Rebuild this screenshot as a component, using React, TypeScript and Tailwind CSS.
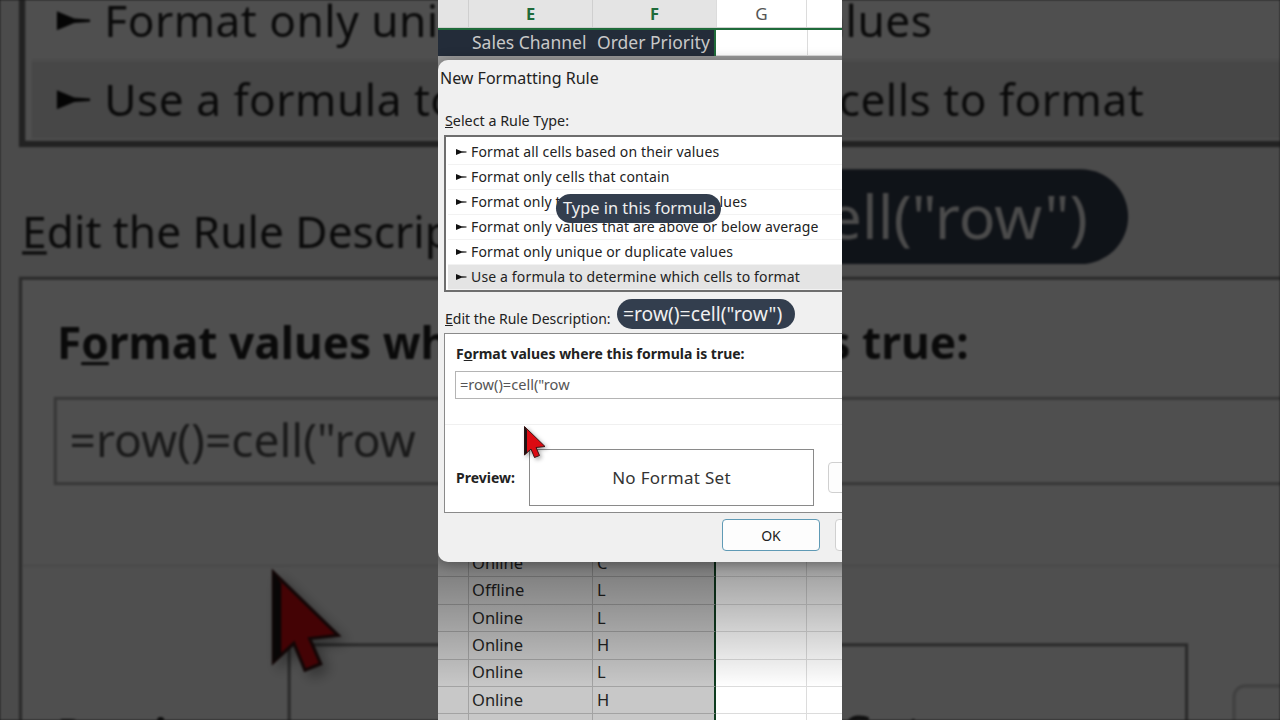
const FONT = "font-['Noto_Sans',sans-serif]";

const ruleTypes = [
  'Format all cells based on their values',
  'Format only cells that contain',
  'Format only top or bottom ranked values',
  'Format only values that are above or below average',
  'Format only unique or duplicate values',
  'Use a formula to determine which cells to format',
];

const bottomRows = [
  ['Online', 'C'],
  ['Offline', 'L'],
  ['Online', 'L'],
  ['Online', 'H'],
  ['Online', 'L'],
  ['Online', 'H'],
  ['', ''],
];

function Bullet() {
  return (
    <svg width="12" height="8" viewBox="0 0 12 8" className="shrink-0">
      <path d="M1 1 L6.5 3.3 L11.5 3.6 L11.5 4.4 L6.5 4.7 L1 7 Z" fill="#111" />
    </svg>
  );
}

function Cursor() {
  return (
    <svg width="26" height="36" viewBox="0 0 26 36" className="absolute left-[85px] top-[365px] drop-shadow-[2px_2px_2px_rgba(0,0,0,0.35)]">
      <path d="M1.5 1.5 L1.5 30 L8 24 L11.5 32.5 L16.5 30.5 L13 22.5 L22 21.5 Z" fill="#dc0a12" stroke="#3a1414" strokeWidth="1" />
      <path d="M1.5 1.5 L1.5 30 L4 27.5 L4 5 Z" fill="#1c1414" />
    </svg>
  );
}

// the dialog is wider than the middle column, it gets clipped there
function Dialog() {
  return (
    <div className={`relative flex h-[502px] w-[420px] flex-col rounded-[10px] bg-[#f0f0f0] text-[#222] ${FONT}`}>
      <div className="pl-[2px] pt-[7px] text-[16px] leading-[22px]">New Formatting Rule</div>
      <div className="pl-[7px] pt-[22px] text-[14.3px] leading-[20px]">
        <u>S</u>elect a Rule Type:
      </div>
      <div className="ml-[6px] mt-[4px] flex h-[157px] flex-col border-2 border-[#6e6e6e] bg-white pl-[2px] pt-[2.5px]">
        {ruleTypes.map((t, i) => (
          <div
            key={t}
            className={`flex h-[25px] shrink-0 items-center gap-[4px] border-b border-[#f2f2f2] pl-[7px] text-[14px] tracking-[0.15px] ${i === 5 ? 'bg-[#e4e4e4]' : ''}`}
          >
            <Bullet />
            {t}
          </div>
        ))}
      </div>
      <div className="pl-[7px] pt-[17px] text-[14px] leading-[20px]">
        <u>E</u>dit the Rule Description:
      </div>
      <div className="ml-[6px] mt-[4px] h-[180px] border border-[#8a8a8a] bg-white">
        <div className="pl-[11px] pt-[10px] text-[14px] font-bold leading-[20px]">
          F<u>o</u>rmat values where this formula is true:
        </div>
        <div className="ml-[10px] mt-[7px] flex h-[28px] items-center border border-[#b4b4b4] pl-[4px] text-[14.6px] text-[#555]">
          =row()=cell("row
        </div>
        <div className="mt-[25px] border-t border-[#f0f0f0]" />
        <div className="flex items-center pl-[11px] pt-[24px]">
          <div className="w-[73px] shrink-0 text-[14px] font-bold">Preview:</div>
          <div className="flex h-[57px] w-[285px] shrink-0 items-center justify-center border border-[#8a8a8a] text-[17px] tracking-[0.3px] text-[#333]">
            No Format Set
          </div>
          <div className="ml-[14px] h-[31px] w-[40px] shrink-0 rounded-[4px] border border-[#d0d0d0] bg-[#fdfdfd]" />
        </div>
      </div>
      <div className="flex gap-[15px] pl-[284px] pt-[6px]">
        <div className="flex h-[32px] w-[98px] shrink-0 items-center justify-center rounded-[4px] border-[1.5px] border-[#5f9ab5] bg-[#fdfdfd] text-[14px]">
          OK
        </div>
        <div className="h-[32px] w-[40px] shrink-0 rounded-[4px] border border-[#d0d0d0] bg-[#fdfdfd]" />
      </div>

      <div className="absolute left-[118px] top-[134px] flex h-[29px] items-center rounded-full bg-[#333e4e] pl-[7px] pr-[5px] pb-[1px] text-[16.4px] text-[#f0f0f0]">
        Type in this formula
      </div>
      <div className="absolute left-[179px] top-[239px] flex h-[30px] items-center rounded-full bg-[#333e4e] pl-[6px] pr-[13px] text-[19.3px] text-[#f0f0f0]">
        =row()=cell("row")
      </div>
      <Cursor />
    </div>
  );
}

function Sheet() {
  return (
    <div className={`h-full bg-white text-[16.5px] text-[#222] ${FONT}`}>
      <div className="grid h-[28px] grid-cols-[31px_124px_123px_91px_35px] border-b border-[#cfcfcf] text-center leading-[27px]">
        <div className="border-r border-[#cfcfcf] bg-[#e4e4e4]" />
        <div className="border-r border-[#cfcfcf] bg-[#e4e4e4] font-bold text-[#1f6b3a]">E</div>
        <div className="bg-[#e4e4e4] font-bold text-[#1f6b3a]">F</div>
        <div className="border-x border-[#dcdcdc] text-[17px] text-[#555]">G</div>
        <div />
      </div>
      <div className="grid h-[28px] grid-cols-[31px_124px_123px_91px_35px] border-t-2 border-[#1f6b3a] text-[17.5px] leading-[24px]">
        <div className="bg-[#232c39]" />
        <div className="whitespace-nowrap bg-[#232c39] pl-[3px] text-[#c8c8c8]">Sales Channel</div>
        <div className="whitespace-nowrap border-r-2 border-[#1f6b3a] bg-[#232c39] pl-[4px] text-[#c8c8c8]">Order Priority</div>
        <div className="border-b border-[#dcdcdc]" />
        <div className="border-b border-l border-[#dcdcdc]" />
      </div>
      <div className="h-[494px]" />
      {bottomRows.map((r, i) => (
        <div key={i} className="grid h-[27.4px] grid-cols-[31px_124px_123px_91px_35px]">
          <div className="border-b border-r border-[#a3a3a3] bg-[#c8c8c8]" />
          <div className="flex items-center border-b border-r border-[#a3a3a3] bg-[#c8c8c8] pl-[3px]">{r[0]}</div>
          <div className="flex items-center border-b border-r-2 border-r-[#0f3d20] border-b-[#a3a3a3] bg-[#c8c8c8] pl-[4px]">{r[1]}</div>
          <div className="border-b border-r border-[#dcdcdc]" />
          <div className="border-b border-[#dcdcdc]" />
        </div>
      ))}
    </div>
  );
}

export default function App() {
  return (
    <div className="relative h-[720px] w-[1280px] overflow-hidden bg-[#4d4d4d]">
      {/* blown up copy of the dialog behind the video */}
      <div aria-hidden className="absolute inset-0 overflow-hidden blur-[1px]">
        <div className="absolute left-0 top-[-586px] origin-top-left scale-[3.16]">
          <Dialog />
        </div>
      </div>
      <div className="absolute inset-0 bg-black/[0.69]" />

      <div className="relative mx-auto h-full w-[404px] overflow-hidden">
        <Sheet />
        {/* dialog shadow falling on the sheet */}
        <div className="absolute inset-x-0 bottom-0 top-[56px] bg-gradient-to-b from-black/40 from-[76%] to-black/0 to-[95%]" />
        <div className="absolute left-0 top-[60px] rounded-[10px] shadow-[0_2px_14px_rgba(0,0,0,0.35)]">
          <Dialog />
        </div>
      </div>
    </div>
  );
}
